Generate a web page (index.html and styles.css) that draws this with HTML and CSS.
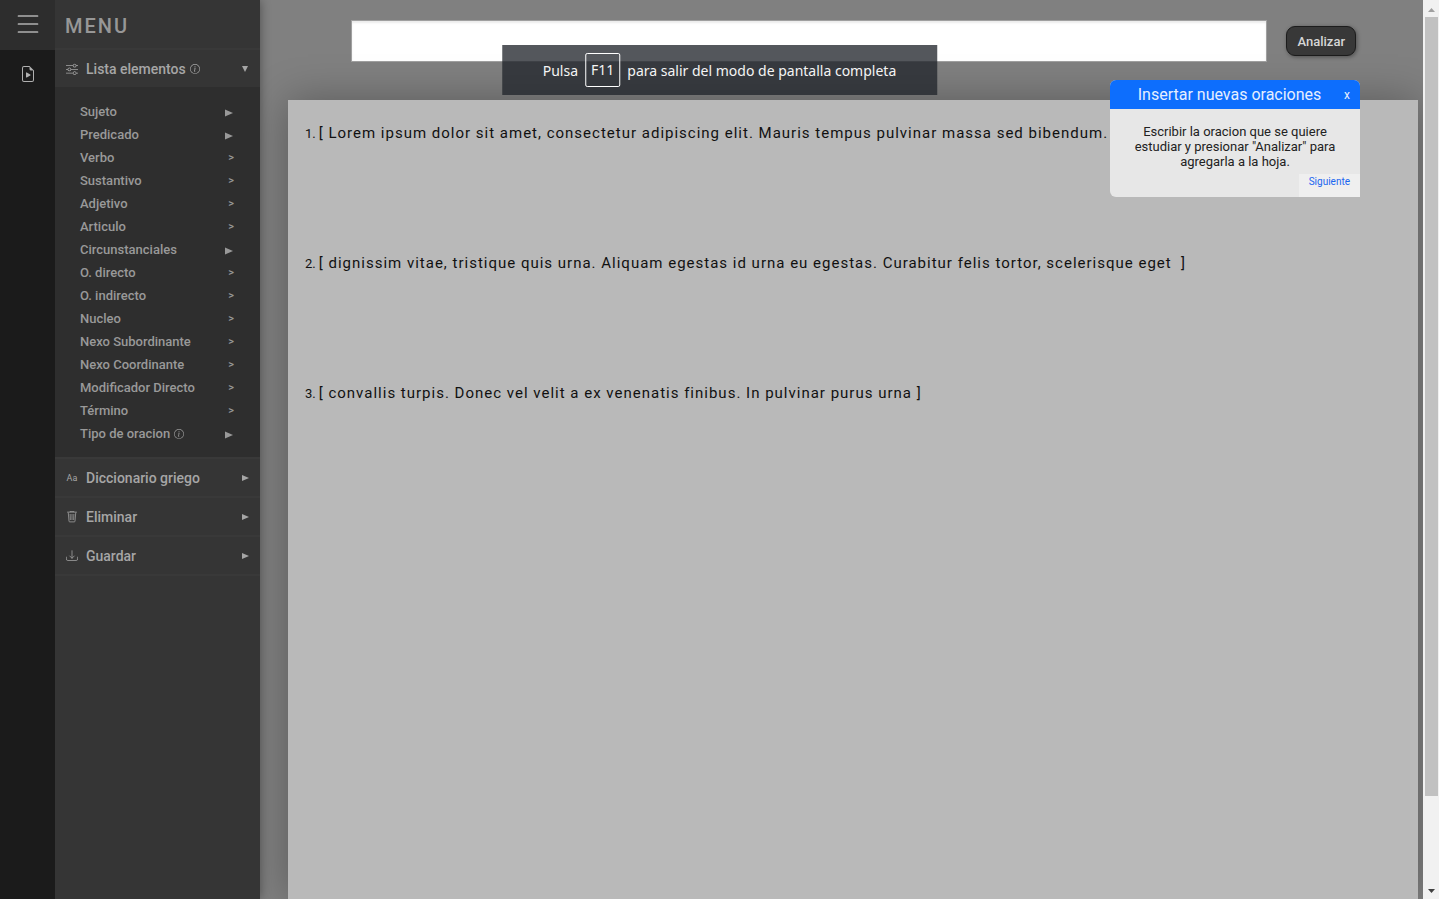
FILE: index.html
```html
<!DOCTYPE html>
<html lang="es">
<head>
<meta charset="utf-8">
<title>Analizador de oraciones</title>
<link rel="stylesheet" href="styles.css">
</head>
<body>
<div class="app">
  <nav class="rail" aria-label="Principal">
    <button class="rail-toggle" aria-label="Menu"><svg width="22" height="20" viewBox="0 0 22 20" fill="none" stroke="currentColor" stroke-width="1.700" stroke-linecap="round"><path d="M1.500 2h19M1.500 10h19M1.500 18h19"/></svg></button>
    <button class="rail-item" aria-label="Tutorial"><svg width="16" height="16" viewBox="0 0 16 16" fill="currentColor"><path d="M6 6.9v4.200a.5.5 0 0 0 .757.429l3.528-2.117a.5.5 0 0 0 0-.858L6.757 6.435A.5.5 0 0 0 6 6.883z"/><path d="M14 14V4.500L9.500 0H4a2 2 0 0 0-2 2v12a2 2 0 0 0 2 2h8a2 2 0 0 0 2-2zM9.500 3A1.500 1.500 0 0 0 11 4.500h2V14a1 1 0 0 1-1 1H4a1 1 0 0 1-1-1V2a1 1 0 0 1 1-1h5.500v2z"/></svg></button>
  </nav>

  <aside class="menu">
    <h1 class="menu-title">MENU</h1>
    <button class="section"><svg class="section-icon" viewBox="0 0 16 16" fill="currentColor"><path fill-rule="evenodd" d="M11.500 2a1.500 1.500 0 1 0 0 3 1.500 1.500 0 0 0 0-3M9.050 3a2.500 2.500 0 0 1 4.900 0H16v1h-2.050a2.500 2.500 0 0 1-4.900 0H0V3zM4.500 7a1.500 1.500 0 1 0 0 3 1.500 1.500 0 0 0 0-3M2.050 8a2.500 2.500 0 0 1 4.900 0H16v1H6.950a2.500 2.500 0 0 1-4.900 0H0V8zm9.450 4a1.500 1.500 0 1 0 0 3 1.500 1.500 0 0 0 0-3m-2.450 1a2.500 2.500 0 0 1 4.900 0H16v1h-2.050a2.500 2.500 0 0 1-4.900 0H0v-1z"/></svg><span>Lista elementos</span><svg class="info" viewBox="0 0 16 16" fill="currentColor"><path d="M8 15A7 7 0 1 1 8 1a7 7 0 0 1 0 14m0 1A8 8 0 1 0 8 0a8 8 0 0 0 0 16"/><path d="m8.930 6.588-2.290.287-.082.380.450.083c.294.070.352.176.288.469l-.738 3.468c-.194.897.105 1.319.808 1.319.545 0 1.178-.252 1.465-.598l.088-.416c-.200.176-.492.246-.686.246-.275 0-.375-.193-.304-.533zM9 4.500a1 1 0 1 1-2 0 1 1 0 0 1 2 0"/></svg><svg class="caret" viewBox="0 0 8 8" fill="currentColor"><path d="M1 1h6L4 7z"/></svg></button>
    <ul class="elements">
      <li><button class="element"><span>Sujeto</span><svg class="arrow" viewBox="0 0 9 8" fill="currentColor"><path d="M0 0l9 4-9 4z"/></svg></button></li>
      <li><button class="element"><span>Predicado</span><svg class="arrow" viewBox="0 0 9 8" fill="currentColor"><path d="M0 0l9 4-9 4z"/></svg></button></li>
      <li><button class="element"><span>Verbo</span><span class="more">&gt;</span></button></li>
      <li><button class="element"><span>Sustantivo</span><span class="more">&gt;</span></button></li>
      <li><button class="element"><span>Adjetivo</span><span class="more">&gt;</span></button></li>
      <li><button class="element"><span>Articulo</span><span class="more">&gt;</span></button></li>
      <li><button class="element"><span>Circunstanciales</span><svg class="arrow" viewBox="0 0 9 8" fill="currentColor"><path d="M0 0l9 4-9 4z"/></svg></button></li>
      <li><button class="element"><span>O. directo</span><span class="more">&gt;</span></button></li>
      <li><button class="element"><span>O. indirecto</span><span class="more">&gt;</span></button></li>
      <li><button class="element"><span>Nucleo</span><span class="more">&gt;</span></button></li>
      <li><button class="element"><span>Nexo Subordinante</span><span class="more">&gt;</span></button></li>
      <li><button class="element"><span>Nexo Coordinante</span><span class="more">&gt;</span></button></li>
      <li><button class="element"><span>Modificador Directo</span><span class="more">&gt;</span></button></li>
      <li><button class="element"><span>Término</span><span class="more">&gt;</span></button></li>
      <li><button class="element"><span>Tipo de oracion</span><svg class="info" viewBox="0 0 16 16" fill="currentColor"><path d="M8 15A7 7 0 1 1 8 1a7 7 0 0 1 0 14m0 1A8 8 0 1 0 8 0a8 8 0 0 0 0 16"/><path d="m8.930 6.588-2.290.287-.082.380.450.083c.294.070.352.176.288.469l-.738 3.468c-.194.897.105 1.319.808 1.319.545 0 1.178-.252 1.465-.598l.088-.416c-.200.176-.492.246-.686.246-.275 0-.375-.193-.304-.533zM9 4.500a1 1 0 1 1-2 0 1 1 0 0 1 2 0"/></svg><svg class="arrow" viewBox="0 0 9 8" fill="currentColor"><path d="M0 0l9 4-9 4z"/></svg></button></li>
    </ul>
    <button class="section"><span class="section-icon letters">Aa</span><span>Diccionario griego</span><svg class="caret" viewBox="0 0 8 8" fill="currentColor"><path d="M1 1l7 3-7 3z"/></svg></button>
    <button class="section"><svg class="section-icon" viewBox="0 0 16 16" fill="none" stroke="currentColor"><path d="M5.500 1.500v-1h5v1M1.500 1.500h13M3 2l1 11.500q.100 1 1 1h6q.900 0 1-1L13 2M5.500 4l.300 8M8 4v8M10.500 4l-.300 8"/></svg><span>Eliminar</span><svg class="caret" viewBox="0 0 8 8" fill="currentColor"><path d="M1 1l7 3-7 3z"/></svg></button>
    <button class="section last"><svg class="section-icon" viewBox="0 0 16 16" fill="none" stroke="currentColor" stroke-linecap="round" stroke-linejoin="round"><path d="M.5 9.500V12a2 2 0 0 0 2 2h11a2 2 0 0 0 2-2V9.500M8 1v10M5 8l3 3 3-3"/></svg><span>Guardar</span><svg class="caret" viewBox="0 0 8 8" fill="currentColor"><path d="M1 1l7 3-7 3z"/></svg></button>
  </aside>

  <main class="work">
    <form class="composer">
      <input class="sentence-input" type="text" aria-label="Oracion">
      <button class="analyze" type="button">Analizar</button>
    </form>
    <ol class="sheet">
      <li class="sentence"><span class="number">1.</span><span>[ Lorem ipsum dolor sit amet, consectetur adipiscing elit. Mauris tempus pulvinar massa sed bibendum. ]</span></li>
      <li class="sentence"><span class="number">2.</span><span>[ dignissim vitae, tristique quis urna. Aliquam egestas id urna eu egestas. Curabitur felis tortor, scelerisque eget &nbsp;]</span></li>
      <li class="sentence"><span class="number">3.</span><span>[ convallis turpis. Donec vel velit a ex venenatis finibus. In pulvinar purus urna ]</span></li>
    </ol>
  </main>

  <div class="scrollbar" aria-hidden="true">
    <svg class="scroll-arrow up" viewBox="0 0 7 4" fill="currentColor"><path d="M0 4l3.500-4L7 4z"/></svg>
    <div class="scroll-track"><div class="scroll-thumb"></div></div>
    <svg class="scroll-arrow" viewBox="0 0 7 4" fill="currentColor"><path d="M0 0h7L3.500 4z"/></svg>
  </div>
</div>

<section class="tour" role="dialog" aria-labelledby="tour-title">
  <header class="tour-head">
    <h2 class="tour-title" id="tour-title">Insertar nuevas oraciones</h2>
    <button class="tour-close">x</button>
  </header>
  <p class="tour-text">Escribir la oracion que se quiere estudiar y presionar "Analizar" para agregarla a la hoja.</p>
  <button class="tour-next">Siguiente</button>
</section>

<div class="toast" role="status"><span>Pulsa</span><kbd class="key">F11</kbd><span>para salir del modo de pantalla completa</span></div>
</body>
</html>
```
FILE: styles.css
```css
* {
  box-sizing: border-box;
}

body {
  margin: 0;
  font-family: Roboto, "Liberation Sans", sans-serif;
  background: #808080;
}

button {
  margin: 0;
  padding: 0;
  border: 0;
  background: none;
  color: inherit;
  font: inherit;
}

.app {
  display: flex;
  height: 100vh;
  overflow: hidden;
}

.rail {
  z-index: 2;
  display: flex;
  flex: none;
  flex-direction: column;
  width: 55px;
  background: #1b1b1b;
  color: #b0b0b0;
}

.rail-toggle,
.rail-item {
  display: flex;
  align-items: center;
  justify-content: center;
  height: 48px;
}

.rail-toggle {
  height: 50px;
  padding-bottom: 2px;
  background: #2d2d2d;
}

.menu {
  z-index: 1;
  display: flex;
  flex: none;
  flex-direction: column;
  width: 205px;
  background: #353535;
  box-shadow: 0 0 10px rgba(0, 0, 0, 0.4);
  color: #a6a6a6;
}

.menu-title {
  margin: 0;
  padding: 14px 10px 10px;
  font-size: 20px;
  font-weight: 500;
  line-height: 24px;
  letter-spacing: 2px;
  color: #979797;
}

.section {
  display: flex;
  align-items: center;
  height: 39px;
  padding: 0 11px;
  border-top: 2px solid #393939;
  font-size: 14px;
  font-weight: 500;
}

.last {
  height: 41px;
  border-bottom: 2px solid #393939;
}

.section-icon {
  width: 12px;
  height: 12px;
  margin-right: 8px;
}

.letters {
  font-size: 9px;
  font-weight: 400;
  line-height: 12px;
}

.info {
  width: 10px;
  height: 10px;
  margin-left: 4px;
}

.caret {
  width: 8px;
  height: 8px;
  margin-left: auto;
}

.elements {
  margin: 0;
  padding: 13px 25px 12px;
  background: #2e2e2e;
  list-style: none;
}

.element {
  display: flex;
  align-items: center;
  width: 100%;
  height: 23px;
  font-size: 13px;
  font-weight: 500;
  color: #999;
}

.arrow {
  width: 8px;
  height: 8px;
  margin: 3px 2px 0 auto;
}

.more {
  margin: 0 1px 0 auto;
  font-size: 11px;
}

.work {
  display: flex;
  flex: 1;
  flex-direction: column;
  min-width: 0;
  padding: 20px 5px 0 28px;
}

.composer {
  display: flex;
  flex: none;
  align-items: center;
  gap: 19px;
  height: 42px;
  margin: 0 62px 38px 63px;
}

.sentence-input {
  flex: 1;
  min-width: 0;
  height: 42px;
  padding: 0 12px;
  border: 1px solid #a0a0a0;
  background: #fff;
  box-shadow: inset 0 2px 2px rgba(0, 0, 0, 0.08);
  font: inherit;
}

.analyze {
  height: 30px;
  padding: 0 10px;
  border: 1px solid #1c1c1c;
  border-radius: 9px;
  background: #383838;
  box-shadow: 1px 1px 4px rgba(0, 0, 0, 0.4);
  color: #d6d6d6;
  font-size: 13px;
  font-weight: 500;
}

.sheet {
  flex: 1;
  margin: 0;
  padding: 20px 17px;
  background: #b9b9b9;
  box-shadow: 0 0 40px rgba(0, 0, 0, 0.3);
  list-style: none;
}

.sentence {
  display: flex;
  align-items: baseline;
  gap: 3px;
  height: 130px;
  font-size: 15px;
  line-height: 26px;
  letter-spacing: 1px;
  white-space: nowrap;
  color: #111;
}

.number {
  font-size: 13px;
  letter-spacing: 0;
}

.scrollbar {
  display: flex;
  flex: none;
  flex-direction: column;
  align-items: center;
  width: 16px;
  padding: 8px 0 6px;
  background: #f1f1f1;
  color: #404040;
}

.scroll-arrow {
  width: 7px;
  height: 4px;
}

.up {
  color: #a0a0a0;
}

.scroll-track {
  flex: 1;
  width: 13px;
  padding: 5px 0 6px;
}

.scroll-thumb {
  height: 90%;
  background: #c1c1c1;
}

.tour {
  position: absolute;
  z-index: 2;
  top: 80px;
  right: 79px;
  display: flex;
  flex-direction: column;
  width: 250px;
  overflow: hidden;
  border-radius: 6px 6px 0 6px;
  background: #e7e7e7;
}

.tour-head {
  display: flex;
  align-items: center;
  height: 29px;
  padding: 0 10px;
  background: #0d6efd;
  color: #e6eeff;
}

.tour-title {
  flex: 1;
  margin: 0;
  padding-right: 5px;
  font-size: 16px;
  font-weight: 400;
  text-align: center;
}

.tour-close {
  font-size: 12px;
}

.tour-text {
  margin: 0;
  padding: 15px 20px 5px;
  font-size: 13px;
  line-height: 15px;
  text-align: center;
  color: #222;
}

.tour-next {
  align-self: flex-end;
  height: 23px;
  padding: 0 10px 9px;
  background: #efefef;
  color: #1a66f0;
  font-size: 10px;
}

.toast {
  position: absolute;
  z-index: 3;
  top: 45px;
  left: 50%;
  display: flex;
  align-items: center;
  gap: 7px;
  height: 50px;
  padding: 0 41px;
  background: rgba(32, 36, 43, 0.77);
  color: #f4f4f4;
  font-family: "Noto Sans", sans-serif;
  font-size: 14px;
  white-space: nowrap;
  transform: translateX(-50%);
}

.key {
  padding: 0 5px;
  border: 1px solid #fff;
  border-radius: 2px;
  font: inherit;
  line-height: 32px;
}
```
